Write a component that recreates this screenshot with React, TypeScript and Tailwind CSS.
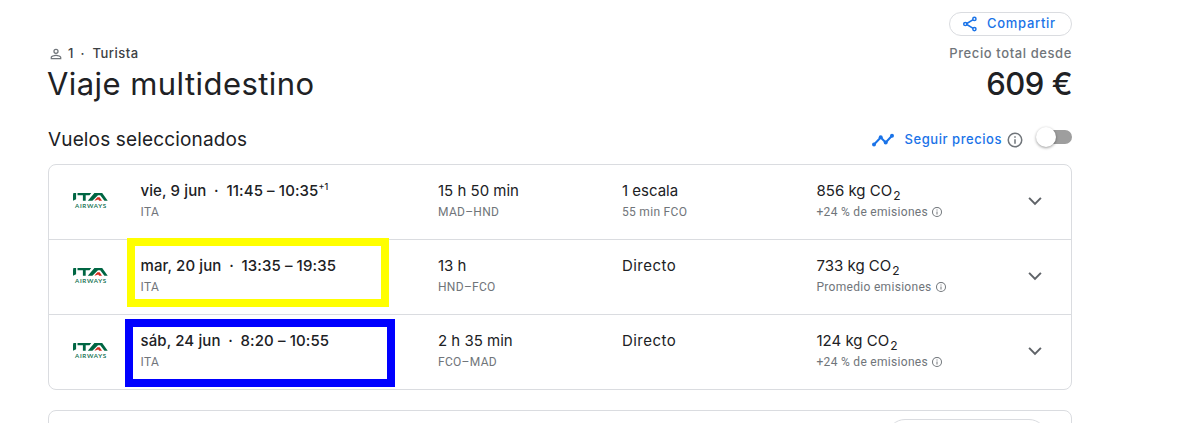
import { ReactNode } from "react";
import clsx from "clsx";

interface Flight {
  date: string;
  times: string;
  extraDays?: string;
  duration: string;
  route: string;
  stops: string;
  stopDetail?: string;
  co2: string;
  emissions: string;
  highlight?: "yellow" | "blue";
}

const flights: Flight[] = [
  {
    date: "vie, 9 jun",
    times: "11:45 – 10:35",
    extraDays: "+1",
    duration: "15 h 50 min",
    route: "MAD–HND",
    stops: "1 escala",
    stopDetail: "55 min FCO",
    co2: "856 kg CO",
    emissions: "+24 % de emisiones",
  },
  {
    date: "mar, 20 jun",
    times: "13:35 – 19:35",
    duration: "13 h",
    route: "HND–FCO",
    stops: "Directo",
    co2: "733 kg CO",
    emissions: "Promedio emisiones",
    highlight: "yellow",
  },
  {
    date: "sáb, 24 jun",
    times: "8:20 – 10:55",
    duration: "2 h 35 min",
    route: "FCO–MAD",
    stops: "Directo",
    co2: "124 kg CO",
    emissions: "+24 % de emisiones",
    highlight: "blue",
  },
];

const PersonIcon = () => (
  <svg className="h-4 w-4" viewBox="0 0 24 24" fill="#70757a">
    <path d="M12 5.9a2.1 2.1 0 1 1 0 4.2 2.1 2.1 0 0 1 0-4.2m0 9c2.97 0 6.1 1.46 6.1 2.1v1.1H5.9V17c0-.64 3.13-2.1 6.1-2.1M12 4a4 4 0 1 0 0 8 4 4 0 0 0 0-8m0 9c-2.67 0-8 1.34-8 4v3h16v-3c0-2.66-5.33-4-8-4" />
  </svg>
);

const ShareIcon = () => (
  <svg className="h-4 w-4" viewBox="0 0 16 16" fill="none" stroke="#1a73e8" strokeWidth="1.5">
    <path d="M4 8l8-4.9M4 8l8 4.9" />
    <circle cx="3.3" cy="8" r="1.6" fill="white" />
    <circle cx="12.4" cy="2.9" r="1.6" fill="white" />
    <circle cx="12.4" cy="13.1" r="1.6" fill="white" />
  </svg>
);

const TrendIcon = () => (
  <svg className="h-6 w-6" viewBox="0 0 24 24" fill="#1a73e8">
    <path d="M3 16.5L9.7 9.5L14.7 14.5L21 7.7" fill="none" stroke="#1a73e8" strokeWidth="2" />
    <circle cx="3" cy="16.5" r="2" />
    <circle cx="9.7" cy="9.3" r="2" />
    <circle cx="14.7" cy="14.6" r="2" />
    <circle cx="21" cy="7.7" r="2" />
  </svg>
);

const InfoIcon = ({ className }: { className: string }) => (
  <svg className={className} viewBox="0 0 24 24" fill="#70757a">
    <path d="M11 7h2v2h-2zm0 4h2v6h-2zm1-9a10 10 0 1 0 0 20 10 10 0 0 0 0-20m0 18a8 8 0 1 1 0-16 8 8 0 0 1 0 16" />
  </svg>
);

const ChevronIcon = () => (
  <svg className="h-6 w-6" viewBox="0 0 24 24" fill="#5f6368">
    <path d="M17.2 8.2L12 13.4 6.8 8.2 5.4 9.6l6.6 6.6 6.6-6.6z" />
  </svg>
);

const ItaLogo = () => (
  <svg className="h-[18px] w-9" viewBox="0 0 36 18">
    <g fill="#006643">
      <path d="M1.4 1h2.7v6.2L1 8.700V3z" />
      <path d="M5.500 1h13.800l-1.800 2.200h-3.800v5.500h-2.800V3.200H5.500z" />
      <path d="M22.400 1h7.800L35.700 8.700h-3.300l-4.200-5.500h-2.200l-5.600 5.500h-4.600z" />
    </g>
    <path d="M25.400 5.200h2.200L30 8.700h-2.800l-1-1.300-2.700 1h-1z" fill="#d52b1e" />
    <text
      x="3"
      y="15.800"
      textLength="31"
      fill="#006643"
      fontSize="6.200"
      fontFamily="Lato, sans-serif"
      stroke="#006643"
      strokeWidth="0.1"
    >
      AIRWAYS
    </text>
  </svg>
);

const Secondary = ({ children }: { children: ReactNode }) => (
  <div className="flex h-4 items-center font-['Roboto',sans-serif] text-xs tracking-[0.3px] text-[#70757a]">
    {children}
  </div>
);

const FlightRow = ({ flight }: { flight: Flight }) => (
  <div className="relative flex h-[75px] border-b border-[#dadce0] pt-4 text-[15px] leading-5 text-[#202124] last:border-b-0">
    {flight.highlight && (
      <div
        className={clsx(
          "pointer-events-none absolute border-8",
          flight.highlight === "yellow" && "-top-[2px] left-[78px] h-[69px] w-[262px] border-[#ffff00]",
          flight.highlight === "blue" && "top-1 left-[76px] h-[68px] w-[270px] border-[#0000ff]"
        )}
      />
    )}
    <div className="w-[91.500px] shrink-0 pt-[11px] pl-[23px]">
      <ItaLogo />
    </div>
    <div className="w-[297.500px] shrink-0">
      <div className="flex h-[23px] font-medium tracking-[0.1px]">
        <span>{flight.date}</span>
        <span className="w-5 text-center">·</span>
        <span>{flight.times}</span>
        {flight.extraDays && <span className="-mt-1 text-[9px] tracking-normal">{flight.extraDays}</span>}
      </div>
      <Secondary>ITA</Secondary>
    </div>
    <div className="w-[184px] shrink-0">
      <div className="h-[23px]">{flight.duration}</div>
      <Secondary>{flight.route}</Secondary>
    </div>
    <div className="w-[194.500px] shrink-0">
      <div className={clsx("h-[23px]", !flight.stopDetail && "tracking-[0.45px]")}>{flight.stops}</div>
      {flight.stopDetail && <Secondary>{flight.stopDetail}</Secondary>}
    </div>
    <div className="w-[206.500px] shrink-0">
      <div className="h-[23px]">
        {flight.co2}
        <sub className="-bottom-1 ml-px text-xs">2</sub>
      </div>
      <Secondary>
        {flight.emissions}
        <InfoIcon className="ml-[3px] h-3 w-3" />
      </Secondary>
    </div>
    <div className="pt-2">
      <button className="block">
        <ChevronIcon />
      </button>
    </div>
  </div>
);

const Header = () => (
  <header className="flex h-[104px] justify-between">
    <div className="pt-[46px]">
      <div className="flex h-4 items-center text-[13px] font-medium text-[#3c4043]">
        <PersonIcon />
        <span className="ml-1">1</span>
        <span className="w-[18px] text-center">·</span>
        <span className="ml-px tracking-[0.5px]">Turista</span>
      </div>
      <h1 className="mt-[3px] -ml-px text-[31px] leading-[38px] tracking-[0.44px] text-[#202124]">Viaje multidestino</h1>
    </div>
    <div className="flex flex-col items-end pt-3">
      <button className="flex h-6 w-[123px] items-center rounded-full border border-[#dadce0] pl-3 text-[13px] font-medium text-[#1a73e8]">
        <ShareIcon />
        <span className="ml-[9px] tracking-[0.7px]">Compartir</span>
      </button>
      <div className="mt-[9px] h-4 text-[13px] leading-4 font-medium tracking-[0.6px] text-[#70757a]">
        Precio total desde
      </div>
      <div className="mt-1 text-[31px] leading-[38px] font-medium tracking-[-0.5px] text-[#202124]">609 €</div>
    </div>
  </header>
);

const PriceTracking = () => (
  <div className="flex items-center">
    <TrendIcon />
    <span className="ml-[10px] text-[13px] font-medium tracking-[0.55px] text-[#1a73e8]">Seguir precios</span>
    <InfoIcon className="ml-1 h-[18px] w-[18px]" />
    <div className="relative -top-[3px] ml-3 flex h-5 w-9 items-center">
      <div className="ml-1 h-[14px] w-8 rounded-full bg-[#9e9e9e]" />
      <div className="absolute left-0 h-5 w-5 rounded-full bg-white shadow-[0_1px_3px_rgba(0,0,0,0.4)]" />
    </div>
  </div>
);

const App = () => {
  return (
    <main className="h-[423px] w-[1177px] overflow-hidden bg-white pl-12 font-['Inter',sans-serif]">
      <div className="w-[1024px]">
        <Header />
        <div className="flex h-[60px] items-center justify-between pt-[11px]">
          <h2 className="pt-[2px] text-[19px] tracking-[0.15px] text-[#202124]">Vuelos seleccionados</h2>
          <PriceTracking />
        </div>
        <section className="h-[226px] rounded-lg border border-[#dadce0]">
          {flights.map((flight) => (
            <FlightRow key={flight.date} flight={flight} />
          ))}
        </section>
        <section className="mt-5 flex h-20 justify-end rounded-lg border border-[#dadce0] pt-2 pr-6">
          <div className="h-9 w-40 rounded-full border border-[#dadce0]" />
        </section>
      </div>
    </main>
  );
};

export default App;
